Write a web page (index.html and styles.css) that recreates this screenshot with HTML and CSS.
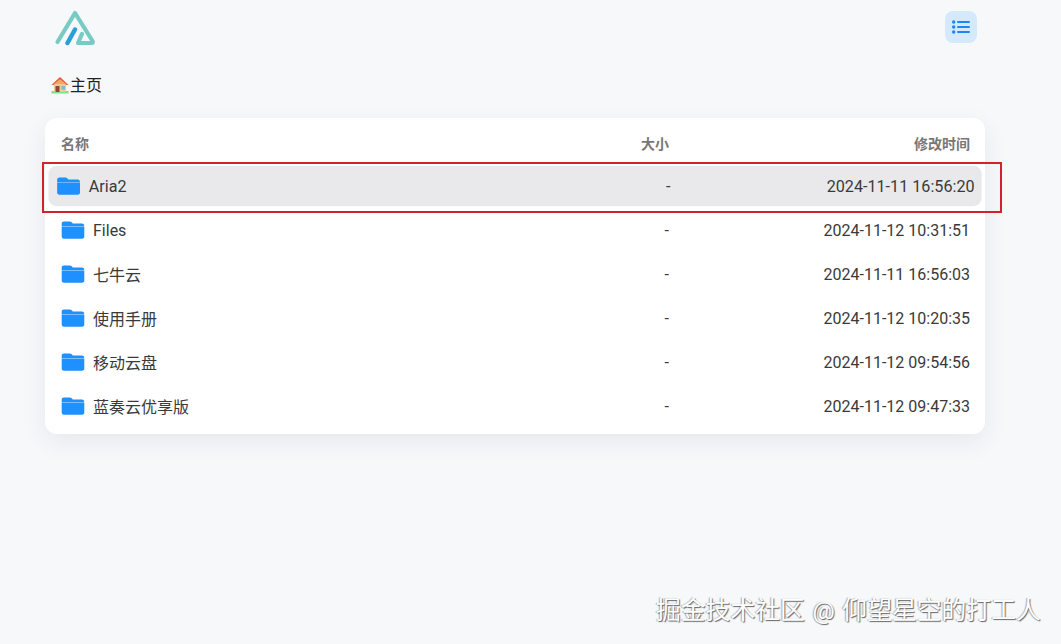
FILE: index.html
```html
<!DOCTYPE html>
<html lang="zh-CN">
<head>
<meta charset="utf-8">
<title>主页</title>
<link rel="stylesheet" href="styles.css">
</head>
<body>
<svg class="sprite" width="0" height="0" aria-hidden="true">
  <symbol id="folder" viewBox="0 0 24 20">
    <path fill="#1e90ff" d="M3 1.500h5.800c.8 0 1.400.3 1.900.8l1.100 1.200h9.200c1.300 0 2.200.9 2.200 2.200v.5H.7V3.800C.7 2.400 1.600 1.500 3 1.500z"/>
    <path fill="#6fb8ff" d="M.7 6.200h22.600v.5H.7z"/>
    <path fill="#1e90ff" d="M.7 6.700h22.600v9.800c0 1.300-.9 2.200-2.200 2.200H2.900c-1.300 0-2.200-.9-2.200-2.200z"/>
  </symbol>
</svg>
<div class="page">
  <header class="topbar">
    <svg class="logo" viewBox="0 0 42 36" width="42" height="36">
      <path d="M3.500 32 L21 3 L38.500 31 Q39.500 33 37.500 33 H24 L28 24" fill="none" stroke="#78cbc5" stroke-width="4.200" stroke-linecap="round" stroke-linejoin="round"/>
      <path d="M13.500 33 L21 19.500" fill="none" stroke="#2a9fd8" stroke-width="4.500" stroke-linecap="round"/>
    </svg>
    <button class="menu-btn" aria-label="菜单">
      <svg viewBox="0 0 18 14" width="18" height="14">
        <g fill="#1e86f0">
          <circle cx="1.700" cy="2" r="1.700"/><circle cx="1.700" cy="7" r="1.700"/><circle cx="1.700" cy="12" r="1.700"/>
          <rect x="5" y="1" width="13" height="2" rx="1"/><rect x="5" y="6" width="13" height="2" rx="1"/><rect x="5" y="11" width="13" height="2" rx="1"/>
        </g>
      </svg>
    </button>
  </header>
  <nav class="crumb">
    <svg class="house" viewBox="0 0 20 20" width="20" height="20">
      <rect x="1.500" y="16" width="17" height="2.500" fill="#7fdc9a"/>
      <path d="M4 9h12v8H4z" fill="#f6c98a"/>
      <path d="M1.500 10 L10 2 L18.500 10 L16.500 10 L10 4.500 L3.500 10z" fill="#e8553f"/>
      <path d="M4 9 L10 4.500 L16 9z" fill="#f4a65c"/>
      <rect x="5.500" y="11" width="4" height="6" fill="#8a4a32"/>
      <rect x="11.500" y="11" width="3.500" height="3.500" fill="#7db8d8"/>
    </svg>
    <span class="crumb-text">主页</span>
  </nav>
  <main class="card">
    <div class="row head">
      <span class="name">名称</span><span class="size">大小</span><span class="time">修改时间</span>
    </div>
    <div class="row active">
      <span class="name"><svg class="folder"><use href="#folder"/></svg>Aria2</span><span class="size">-</span><span class="time">2024-11-11 16:56:20</span>
    </div>
    <div class="row">
      <span class="name"><svg class="folder"><use href="#folder"/></svg>Files</span><span class="size">-</span><span class="time">2024-11-12 10:31:51</span>
    </div>
    <div class="row">
      <span class="name"><svg class="folder"><use href="#folder"/></svg>七牛云</span><span class="size">-</span><span class="time">2024-11-11 16:56:03</span>
    </div>
    <div class="row">
      <span class="name"><svg class="folder"><use href="#folder"/></svg>使用手册</span><span class="size">-</span><span class="time">2024-11-12 10:20:35</span>
    </div>
    <div class="row">
      <span class="name"><svg class="folder"><use href="#folder"/></svg>移动云盘</span><span class="size">-</span><span class="time">2024-11-12 09:54:56</span>
    </div>
    <div class="row">
      <span class="name"><svg class="folder"><use href="#folder"/></svg>蓝奏云优享版</span><span class="size">-</span><span class="time">2024-11-12 09:47:33</span>
    </div>
  </main>
</div>
<div class="highlight"></div>
<div class="watermark">掘金技术社区 @ 仰望星空的打工人</div>
</body>
</html>
```
FILE: styles.css
```css
* { box-sizing: border-box; }
html, body { margin: 0; height: 100%; }
body {
  background: #f7f8fa;
  color: #333;
  font-family: Roboto, "Noto Sans CJK SC", sans-serif;
  overflow: hidden;
}
.sprite { position: absolute; }
.page { width: 940px; margin-left: 45px; }
.topbar {
  height: 62px;
  display: flex;
  align-items: flex-start;
  justify-content: space-between;
  padding: 10px 8px 0 9px;
}
.logo { display: block; }
.menu-btn {
  width: 32px;
  height: 32px;
  margin-top: 1px;
  padding: 0;
  border: 0;
  border-radius: 8px;
  background: #d5e9fd;
  display: flex;
  align-items: center;
  justify-content: center;
}
.crumb {
  height: 56px;
  display: flex;
  align-items: flex-start;
  padding: 13px 0 0 5px;
  font-size: 16px;
  line-height: 22px;
  color: #222;
}
.house { display: block; flex: none; }
.card {
  display: flex;
  flex-direction: column;
  gap: 4px;
  background: #fff;
  border-radius: 12px;
  box-shadow: 0 8px 24px rgba(30, 50, 80, 0.08);
  padding: 8px;
}
.row {
  display: grid;
  grid-template-columns: 1fr 100px 301px;
  align-items: center;
  height: 40px;
  padding: 0 7px 0 8px;
  font-size: 16px;
  color: #3a3a3a;
}
.row .name { display: flex; align-items: center; gap: 8px; }
.row .size, .row .time { text-align: right; }
.folder { width: 24px; height: 20px; flex: none; display: block; }
.head {
  height: 36px;
  padding-bottom: 2px;
  font-size: 14px;
  font-weight: 700;
  color: #777;
}
.active {
  transform: scale(1.01);
  border-radius: 8px;
  background: #e9e9ec;
}
.highlight {
  position: absolute;
  left: 42px;
  top: 162px;
  width: 960px;
  height: 51px;
  border: 2px solid #d3222e;
}
.watermark {
  position: absolute;
  left: 656px;
  top: 596px;
  font-size: 24.800px;
  word-spacing: 1.500px;
  line-height: 30px;
  color: #fff;
  white-space: nowrap;
  text-shadow: 1px 1px 1px #666, -1px 0 1px #aaa;
}
```
